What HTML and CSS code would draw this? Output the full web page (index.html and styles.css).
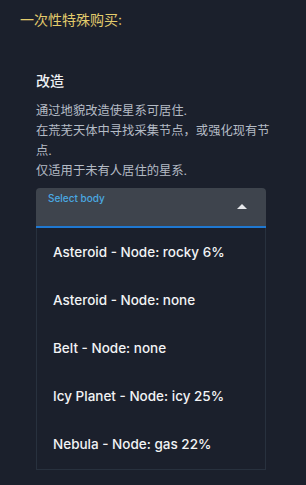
FILE: index.html
```html
<!DOCTYPE html>
<html lang="zh">
<head>
  <meta charset="UTF-8">
  <title>一次性特殊购买</title>
  <meta name="viewport" content="width=device-width, initial-scale=1.0">
  <link rel="stylesheet" href="styles.css">
</head>
<body>
  <h2 class="title">一次性特殊购买:</h2>

  <div class="section">
    <h3 class="heading">改造</h3>
    <p class="desc">通过地貌改造使星系可居住.<br>在荒芜天体中寻找采集节点，或强化现有节点.<br>仅适用于未有人居住的星系.</p>

    <div class="select">
      <span class="select-label">Select body</span>
      <span class="arrow"></span>
    </div>
    <ul class="options">
      <li>Asteroid - Node: rocky 6%</li>
      <li>Asteroid - Node: none</li>
      <li>Belt - Node: none</li>
      <li>Icy Planet - Node: icy 25%</li>
      <li>Nebula - Node: gas 22%</li>
    </ul>
  </div>
</body>
</html>
```

FILE: styles.css
```css
body {
  margin: 0;
  padding: 10px 0 0 0;
  background-color: #1b202c;
  font-family: Inter, "Noto Sans CJK SC", sans-serif;
  color: #eceef1;
}
.title {
  margin: 0 0 0 20px;
  font-size: 14px;
  line-height: 20px;
  font-weight: 400;
  color: #e3cc6c;
}
.section {
  margin: 41px 0 0 36px;
  width: 236px;
}
.heading {
  margin: 0;
  font-size: 14px;
  line-height: 20px;
  font-weight: 500;
  color: #eef0f3;
}
.desc {
  margin: 10px 0 0 0;
  font-size: 12.3px;
  line-height: 20px;
  color: #b4bbc5;
}
.select {
  position: relative;
  margin-top: 7px;
  width: 230px;
  height: 38px;
  background-color: #3e444d;
  border-radius: 4px 4px 0 0;
  border-bottom: 2px solid #1f78d1;
}
.select-label {
  position: absolute;
  left: 12px;
  top: 4px;
  font-size: 10px;
  font-weight: 500;
  color: #4aa9e2;
}
.arrow {
  position: absolute;
  right: 19px;
  top: 16px;
  border-left: 5px solid transparent;
  border-right: 5px solid transparent;
  border-bottom: 5px solid #e6e8eb;
}
.options {
  list-style: none;
  margin: 0;
  padding: 0 0 1px 0;
  width: 228px;
  border: 1px solid #28313e;
  border-top: none;
}
.options li {
  height: 48px;
  line-height: 48px;
  padding-left: 16px;
  font-size: 13.5px;
  font-weight: 500;
  color: #f2f3f5;
}
```
